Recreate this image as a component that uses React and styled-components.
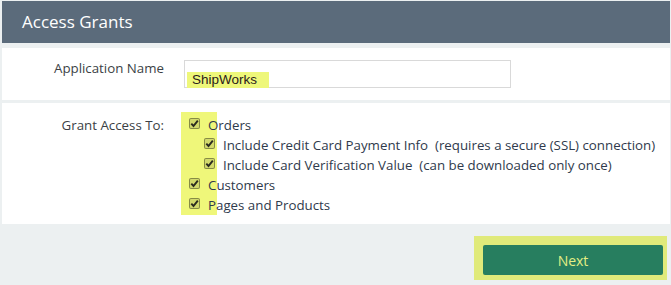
import React from 'react'
import styled, { createGlobalStyle } from 'styled-components'

const GlobalStyle = createGlobalStyle`
  body {
    margin: 0;
    background: #ecf0f1;
    font-family: 'Open Sans', 'Noto Sans', sans-serif;
  }
`

const Page = styled.div`
  padding: 1px 1px 0 2px;
`

const Header = styled.div`
  height: 42px;
  background: #5b6b7b;
  color: #ffffff;
  font-size: 17px;
  line-height: 42px;
  padding-left: 20px;
`

const Section = styled.div`
  background: #ffffff;
  margin-top: ${(p) => p.$gap}px;
  height: ${(p) => p.$height}px;
  padding-top: 12px;
  box-sizing: border-box;
`

const FieldRow = styled.div`
  display: grid;
  grid-template-columns: 162px 1fr;
  column-gap: 20px;
  align-items: start;
`

const Label = styled.div`
  text-align: right;
  font-size: 13.3px;
  line-height: ${(p) => p.$lh || 20}px;
  color: #3b3f45;
`

const TextBox = styled.div`
  width: 327px;
  height: 28px;
  box-sizing: border-box;
  border: 1px solid #d9d9d9;
  padding: 6px 0 0 2px;
`

const Mark = styled.span`
  display: inline-block;
  width: 82px;
  height: 16px;
  background: #eef77a;
  font-family: 'Liberation Sans', Arial, sans-serif;
  font-size: 13.5px;
  line-height: 16px;
  padding-left: 5px;
  box-sizing: border-box;
  color: #2a1a1a;
`

const Options = styled.div`
  position: relative;
  display: flex;
  flex-direction: column;
`

const OptionsHighlight = styled.div`
  position: absolute;
  left: -3px;
  top: -3px;
  width: 36px;
  bottom: 0;
  background: #eff77a;
`

const Option = styled.label`
  position: relative;
  display: flex;
  align-items: center;
  height: 20px;
  padding-left: ${(p) => (p.$nested ? 20 : 5)}px;
  font-size: 13.3px;
  color: #2f3a4c;
  white-space: pre;
`

const Box = styled.span`
  display: inline-flex;
  align-items: center;
  justify-content: center;
  width: 11px;
  height: 11px;
  box-sizing: border-box;
  margin-right: 8px;
  margin-top: -3px;
  border: 1px solid rgba(60, 60, 30, 0.5);
  border-radius: 2px;
  background: rgba(70, 70, 40, 0.16);
`

const Footer = styled.div`
  display: flex;
  justify-content: flex-end;
  padding: 12px 3px 0 0;
`

const ButtonHighlight = styled.div`
  background: #e0ea7a;
  padding: 9px 4px 5px 9px;
`

const NextButton = styled.button`
  width: 180px;
  height: 30px;
  border: none;
  border-radius: 2px;
  background: #277e5f;
  color: #e4ee84;
  font-family: 'Open Sans', sans-serif;
  font-size: 14px;
  cursor: pointer;
`

const Check = () => (
  <Box>
    <svg width='9' height='9' viewBox='0 0 9 9'>
      <path d='M1.3 4.6 L3.5 7 L7.8 1.6' fill='none' stroke='#2b2b20' strokeWidth='1.9' />
    </svg>
  </Box>
)

const options = [
  { text: 'Orders' },
  { text: 'Include Credit Card Payment Info  (requires a secure (SSL) connection)', nested: true },
  { text: 'Include Card Verification Value  (can be downloaded only once)', nested: true },
  { text: 'Customers' },
  { text: 'Pages and Products' },
]

const App = () => {
  return (
    <Page>
      <GlobalStyle />
      <Header>Access Grants</Header>
      <Section $gap={5} $height={52}>
        <FieldRow>
          <Label $lh={16}>Application Name</Label>
          <TextBox>
            <Mark>ShipWorks</Mark>
          </TextBox>
        </FieldRow>
      </Section>
      <Section $gap={3} $height={121}>
        <FieldRow>
          <Label>Grant Access To:</Label>
          <Options>
            <OptionsHighlight />
            {options.map((o) => (
              <Option key={o.text} $nested={o.nested}>
                <Check />
                {o.text}
              </Option>
            ))}
          </Options>
        </FieldRow>
      </Section>
      <Footer>
        <ButtonHighlight>
          <NextButton type='button'>Next</NextButton>
        </ButtonHighlight>
      </Footer>
    </Page>
  )
}

export default App
